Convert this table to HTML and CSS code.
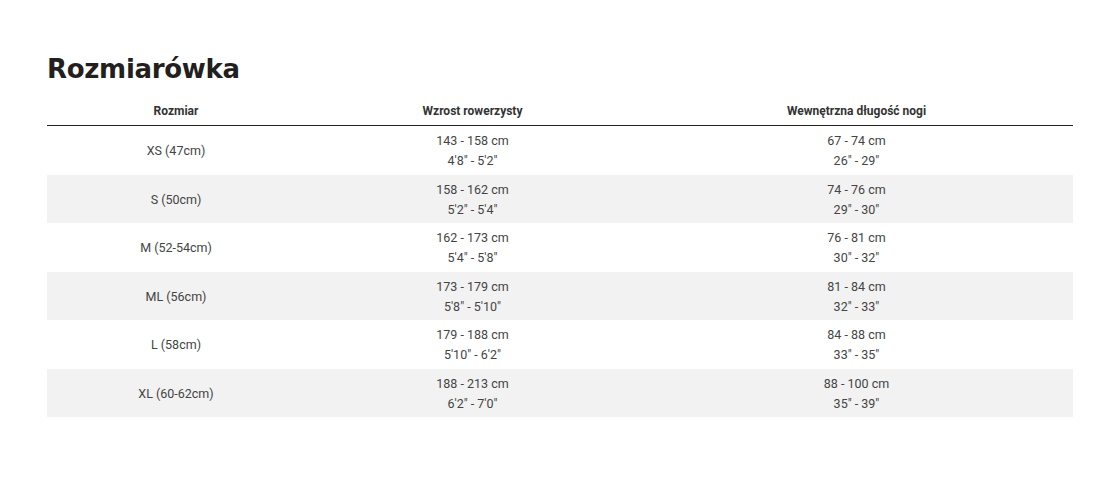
FILE: index.html
```html
<!DOCTYPE html>
<html lang="pl">
<head>
<meta charset="utf-8">
<title>Rozmiarówka</title>
<link rel="stylesheet" href="styles.css">
</head>
<body>
<div class="page">
  <h1 class="title">Rozmiarówka</h1>
  <table class="sizes">
    <thead>
      <tr>
        <th class="c1">Rozmiar</th>
        <th class="c2">Wzrost rowerzysty</th>
        <th class="c3">Wewnętrzna długość nogi</th>
      </tr>
    </thead>
    <tbody>
      <tr><td>XS (47cm)</td><td>143 - 158 cm<br>4'8" - 5'2"</td><td>67 - 74 cm<br>26" - 29"</td></tr>
      <tr class="alt"><td>S (50cm)</td><td>158 - 162 cm<br>5'2" - 5'4"</td><td>74 - 76 cm<br>29" - 30"</td></tr>
      <tr><td>M (52-54cm)</td><td>162 - 173 cm<br>5'4" - 5'8"</td><td>76 - 81 cm<br>30" - 32"</td></tr>
      <tr class="alt"><td>ML (56cm)</td><td>173 - 179 cm<br>5'8" - 5'10"</td><td>81 - 84 cm<br>32" - 33"</td></tr>
      <tr><td>L (58cm)</td><td>179 - 188 cm<br>5'10" - 6'2"</td><td>84 - 88 cm<br>33" - 35"</td></tr>
      <tr class="alt"><td>XL (60-62cm)</td><td>188 - 213 cm<br>6'2" - 7'0"</td><td>88 - 100 cm<br>35" - 39"</td></tr>
    </tbody>
  </table>
</div>
</body>
</html>
```
FILE: styles.css
```css
html, body {
  margin: 0;
  padding: 0;
  background: #fff;
}
.page {
  padding: 51px 0 0 47px;
  width: 1026px;
}
.title {
  margin: 0;
  font-family: "DejaVu Sans", "Noto Sans", sans-serif;
  font-weight: 700;
  font-size: 26px;
  line-height: 36px;
  color: #231f1e;
  letter-spacing: -0.3px;
}
.sizes {
  width: 1026px;
  border-collapse: collapse;
  margin-top: 8px;
  font-family: "Roboto", "Liberation Sans", sans-serif;
}
.sizes th {
  font-size: 12px;
  font-weight: 700;
  color: #333;
  height: 28px;
  padding: 2px 0 0;
  text-align: center;
  vertical-align: middle;
  border-bottom: 1px solid #222;
}
.c1 { width: 258px; }
.c2 { width: 335px; }
.sizes td {
  font-size: 12.5px;
  line-height: 20px;
  color: #444;
  text-align: center;
  vertical-align: middle;
  height: 46.5px;
  padding: 2px 0 0;
}
.sizes tr.alt td {
  background: #f2f2f2;
}
```
